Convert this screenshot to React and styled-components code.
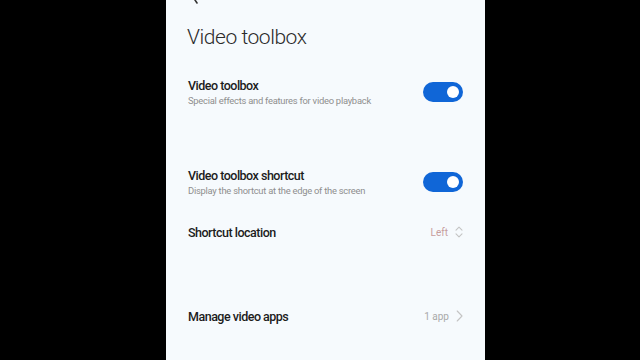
import React from 'react'
import styled, { createGlobalStyle } from 'styled-components'

const Global = createGlobalStyle`
    html, body {
        margin: 0;
        padding: 0;
        background: #000;
    }
    body {
        font-family: Roboto, "Noto Sans", sans-serif;
        -webkit-font-smoothing: antialiased;
    }
`

const Screen = styled.div`
    width: 640px;
    height: 360px;
    overflow: hidden;
    background: #000;
`

const Phone = styled.div`
    margin-left: 166px;
    width: 319px;
    height: 360px;
    background: #f6fafd;
    box-sizing: border-box;
    padding: 0 22px 0 21px;
    display: flex;
    flex-direction: column;
`

const Back = styled.div`
    height: 5px;
    padding-left: 5px;
    display: flex;
    align-items: flex-start;
`

const Title = styled.h1`
    margin: 19px 0 0 0;
    font-size: 21px;
    line-height: 26px;
    font-weight: 300;
    color: #2b2b2b;
    letter-spacing: -0.45px;
`

const Row = styled.div`
    display: flex;
    align-items: center;
    justify-content: space-between;
    height: 50px;
    margin-top: ${p => p.$gap || 0}px;
`

const Texts = styled.div`
    display: flex;
    flex-direction: column;
    padding-left: 1px;
`

const Label = styled.div`
    font-size: 12.5px;
    font-weight: 500;
    color: #1c1c1c;
    line-height: 15px;
    letter-spacing: -0.5px;
`

const Sub = styled.div`
    font-size: 9.4px;
    color: #8e8e8e;
    line-height: 12px;
    margin-top: 2px;
    letter-spacing: -0.25px;
`

const Toggle = styled.div`
    width: 40px;
    height: 20px;
    border-radius: 10px;
    background: #1066d7;
    position: relative;

    &::after {
        content: '';
        position: absolute;
        right: 4px;
        top: 4px;
        width: 12px;
        height: 12px;
        border-radius: 50%;
        background: #fff;
    }
`

const Value = styled.div`
    display: flex;
    align-items: center;
    gap: 7px;
    font-size: 10px;
    color: ${p => p.$color || '#a9a9a9'};
`

function Updown() {
    return (
        <svg width="8" height="12" viewBox="0 0 8 12" fill="none" stroke="#c4c4c4" strokeWidth="1.1" strokeLinecap="round" strokeLinejoin="round">
            <path d="M1 4.2 L4 1.2 L7 4.2" />
            <path d="M1 7.8 L4 10.8 L7 7.8" />
        </svg>
    )
}

function Chevron() {
    return (
        <svg width="7" height="12" viewBox="0 0 7 12" fill="none" stroke="#c4c4c4" strokeWidth="1.1" strokeLinecap="round" strokeLinejoin="round">
            <path d="M1.2 1 L6 6 L1.2 11" />
        </svg>
    )
}

function App() {
    return (
        <Screen>
            <Global />
            <Phone>
                <Back>
                    <svg width="8" height="5" viewBox="0 0 8 5" fill="none" stroke="#333" strokeWidth="1.6" strokeLinecap="round">
                        <path d="M1 -3 L5 3" />
                    </svg>
                </Back>
                <Title>Video toolbox</Title>
                <Row $gap={17}>
                    <Texts>
                        <Label>Video toolbox</Label>
                        <Sub>Special effects and features for video playback</Sub>
                    </Texts>
                    <Toggle />
                </Row>
                <Row $gap={40}>
                    <Texts>
                        <Label>Video toolbox shortcut</Label>
                        <Sub>Display the shortcut at the edge of the screen</Sub>
                    </Texts>
                    <Toggle />
                </Row>
                <Row>
                    <Texts>
                        <Label>Shortcut location</Label>
                    </Texts>
                    <Value $color="#c79d9d">Left <Updown /></Value>
                </Row>
                <Row $gap={34}>
                    <Texts>
                        <Label>Manage video apps</Label>
                    </Texts>
                    <Value>1 app <Chevron /></Value>
                </Row>
            </Phone>
        </Screen>
    )
}

export default App
